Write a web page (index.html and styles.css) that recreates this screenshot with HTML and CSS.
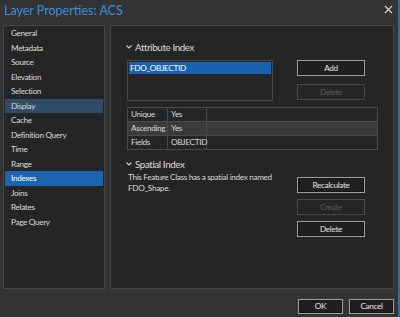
FILE: index.html
```html
<!DOCTYPE html>
<html>
<head>
<meta charset="utf-8">
<link rel="stylesheet" href="styles.css">
</head>
<body>
<div class="window">
  <div class="titlebar">
    <div class="title">Layer Properties: ACS</div>
    <div class="close">
      <svg width="9" height="9" viewBox="0 0 9 9"><path d="M1 1L8 8M8 1L1 8" stroke="#cfcfcf" stroke-width="1.3"/></svg>
    </div>
  </div>
  <div class="main">
    <div class="nav panel">
      <div class="nav-item">General</div>
      <div class="nav-item">Metadata</div>
      <div class="nav-item">Source</div>
      <div class="nav-item">Elevation</div>
      <div class="nav-item">Selection</div>
      <div class="nav-item hover">Display</div>
      <div class="nav-item">Cache</div>
      <div class="nav-item">Definition Query</div>
      <div class="nav-item">Time</div>
      <div class="nav-item">Range</div>
      <div class="nav-item active">Indexes</div>
      <div class="nav-item">Joins</div>
      <div class="nav-item">Relates</div>
      <div class="nav-item">Page Query</div>
    </div>
    <div class="content panel">
      <div class="section-head attr-head">
        <svg class="chev" width="6" height="4" viewBox="0 0 6 4"><path d="M0.5 0.5L3 3L5.5 0.5" stroke="#cfcfcf" stroke-width="1.1" fill="none"/></svg>
        <span>Attribute Index</span>
      </div>
      <div class="attr-row">
        <div class="listbox">
          <div class="list-item selected">FDO_OBJECTID</div>
        </div>
        <div class="btn-col">
          <div class="btn">Add</div>
          <div class="btn disabled">Delete</div>
        </div>
      </div>
      <div class="props">
        <div class="prow"><div class="c1">Unique</div><div class="c2">Yes</div><div class="c3"></div></div>
        <div class="prow hl"><div class="c1">Ascending</div><div class="c2">Yes</div><div class="c3"></div></div>
        <div class="prow"><div class="c1">Fields</div><div class="c2">OBJECTID</div><div class="c3"></div></div>
      </div>
      <div class="section-head spatial-head">
        <svg class="chev" width="6" height="4" viewBox="0 0 6 4"><path d="M0.5 0.5L3 3L5.5 0.5" stroke="#cfcfcf" stroke-width="1.1" fill="none"/></svg>
        <span>Spatial Index</span>
      </div>
      <div class="spatial-row">
        <div class="desc">This Feature Class has a spatial index named FDO_Shape.</div>
        <div class="btn-col spatial-btns">
          <div class="btn">Recalculate</div>
          <div class="btn disabled">Create</div>
          <div class="btn">Delete</div>
        </div>
      </div>
    </div>
  </div>
  <div class="footer">
    <div class="btn foot-btn">OK</div>
    <div class="btn foot-btn">Cancel</div>
  </div>
</div>
</body>
</html>
```
FILE: styles.css
```css
* { box-sizing: border-box; }
html, body { margin: 0; padding: 0; }
body {
  width: 400px;
  height: 317px;
  background: #333333;
  font-family: Lato, "Noto Sans", sans-serif;
  font-size: 8.2px;
  letter-spacing: -0.33px;
  color: #dadada;
  overflow: hidden;
}
.window {
  width: 400px;
  height: 317px;
  border-right: 2px solid #1d6fbf;
  display: flex;
  flex-direction: column;
}
.titlebar {
  height: 25px;
  display: flex;
  align-items: flex-start;
  justify-content: space-between;
}
.title {
  font-size: 12.5px;
  letter-spacing: 0;
  color: #3c8fdc;
  padding: 2px 0 0 4px;
  line-height: 18px;
}
.close {
  padding: 5px 5px 0 0;
}
.main {
  display: flex;
  height: 264px;
  padding-left: 3px;
  gap: 5px;
}
.panel {
  background: #252525;
  border: 1px solid #474747;
  border-radius: 1px;
}
.nav {
  width: 102px;
  padding: 0 0 0 1px;
}
.nav-item {
  height: 14.5px;
  line-height: 14.5px;
  padding-left: 6px;
  color: #dcdcdc;
  margin-right: 1px;
}
.nav-item.hover { background: #2f4c68; }
.nav-item.active { background: #1a64b0; color: #ffffff; }
.content {
  width: 284px;
  padding: 15px 0 0 16px;
}
.section-head {
  display: flex;
  align-items: center;
  font-size: 9.8px;
  letter-spacing: -0.4px;
  color: #dcdcdc;
  height: 12px;
}
.chev { margin-right: 3px; margin-left: -1px; }
.attr-head { margin-bottom: 7px; }
.attr-row {
  display: flex;
  align-items: flex-start;
}
.listbox {
  width: 146px;
  height: 41px;
  border: 1px solid #4a4a4a;
  background: #252525;
  padding: 1px;
}
.list-item {
  height: 12px;
  line-height: 12px;
  padding-left: 1px;
}
.list-item.selected { background: #1a62b0; color: #fff; }
.btn-col {
  margin-left: 24px;
  display: flex;
  flex-direction: column;
  gap: 8px;
}
.btn {
  width: 68px;
  height: 16px;
  line-height: 14px;
  text-align: center;
  border: 1px solid #a0a0a0;
  background: #202020;
  color: #e4e4e4;
  box-shadow: inset 0 0 0 1px #151515;
}
.btn.disabled {
  border-color: #4a4a4a;
  color: #5c5c5c;
  box-shadow: none;
  background: #252525;
}
.props {
  margin-top: 6px;
  width: 251px;
  border: 1px solid #4a4a4a;
}
.prow {
  display: flex;
  height: 14px;
  line-height: 13px;
  border-bottom: 1px solid #4a4a4a;
}
.prow:last-child { border-bottom: none; height: 13px; }
.prow.hl { background: #3a3a3a; }
.c1 { width: 40px; padding-left: 3px; border-right: 1px solid #4a4a4a; white-space: nowrap; }
.c2 { width: 39px; padding-left: 3px; border-right: 1px solid #4a4a4a; }
.c3 { flex: 1; }
.spatial-head { margin-top: 8px; }
.spatial-row {
  display: flex;
  align-items: flex-start;
}
.desc {
  width: 154px;
  margin-right: -8px;
  padding-top: 2px;
  line-height: 11px;
  padding-left: 1px;
}
.spatial-btns {
  margin-top: 7px;
  gap: 6px;
}
.footer {
  flex: 1;
  display: flex;
  justify-content: flex-end;
  align-items: flex-start;
  padding: 10px 4px 0 0;
  gap: 6px;
}
.foot-btn { width: 45px; height: 15px; line-height: 13px; }
```
